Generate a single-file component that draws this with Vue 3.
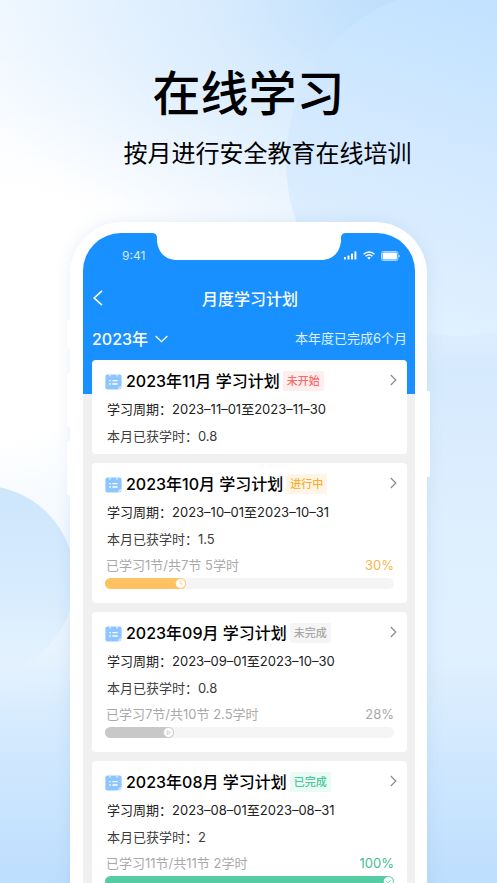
<script setup>
import { ref } from 'vue'

const year = ref('2023')
const plans = [
  { title: '2023年11月 学习计划', status: '未开始', tone: 'red', period: '2023–11–01至2023–11–30', hours: '0.8' },
  { title: '2023年10月 学习计划', status: '进行中', tone: 'orange', period: '2023–10–01至2023–10–31', hours: '1.5', done: '已学习1节/共7节 5学时', percent: '30%', fill: 28, mark: 'clock' },
  { title: '2023年09月 学习计划', status: '未完成', tone: 'gray', period: '2023–09–01至2023–10–30', hours: '0.8', done: '已学习7节/共10节 2.5学时', percent: '28%', fill: 24, mark: 'play' },
  { title: '2023年08月 学习计划', status: '已完成', tone: 'green', period: '2023–08–01至2023–08–31', hours: '2', done: '已学习11节/共11节 2学时', percent: '100%', fill: 100, mark: 'check' },
]
</script>

<template>
  <main class="page">
    <div class="disc disc-right"></div>
    <div class="disc disc-left"></div>

    <header class="hero">
      <h1>在线学习</h1>
      <p>按月进行安全教育在线培训</p>
    </header>

    <div class="phone">
      <span class="key key-mute"></span>
      <span class="key key-up"></span>
      <span class="key key-down"></span>
      <span class="key key-power"></span>

      <div class="screen">
        <svg class="notch" viewBox="0 0 194 27" aria-hidden="true">
          <path d="M0 0Q5 0 5 5V8C6 19 13 27 25 27H169C181 27 188 19 189 8V5Q189 0 194 0Z" fill="#fff" />
        </svg>

        <div class="status">
          <span>9:41</span>
          <span class="status-icons">
            <svg width="13" height="9" viewBox="0 0 13 9" fill="#fff">
              <rect x="0" y="6" width="2" height="2.6" rx=".5" />
              <rect x="3.5" y="4.5" width="2" height="4.1" rx=".5" />
              <rect x="7" y="2.6" width="2" height="6" rx=".5" />
              <rect x="10.4" y=".3" width="2" height="8.3" rx=".5" />
            </svg>
            <svg width="12" height="9" viewBox="0 0 12 9" fill="none" stroke="#fff" stroke-width="1.5">
              <path d="M.6 3.2C3.7.1 8.3.1 11.4 3.2" />
              <path d="M2.6 5.3C4.6 3.5 7.4 3.5 9.4 5.3" />
              <path d="M4.1 6.6C5.3 5.8 6.7 5.8 7.9 6.6L6 8.6Z" fill="#fff" stroke="none" />
            </svg>
            <svg width="19" height="10" viewBox="0 0 19 10">
              <rect x=".5" y=".5" width="16.4" height="9" rx="1.8" fill="none" stroke="#b5dcff" stroke-width=".9" />
              <rect x="1.5" y="1.5" width="14.4" height="7" rx=".8" fill="#fff" />
              <path d="M17.6 3.4Q19 4 19 5T17.6 6.6Z" fill="#b5dcff" />
            </svg>
          </span>
        </div>

        <nav class="nav">
          <button class="back" type="button" aria-label="返回">
            <svg width="10" height="16" viewBox="0 0 10 16" fill="none" stroke="#fff" stroke-width="1.6"><path d="M9 .8 1.2 8 9 15.2" /></svg>
          </button>
          <h2>月度学习计划</h2>
        </nav>

        <div class="summary">
          <label class="year">
            <select v-model="year" aria-label="年份">
              <option value="2023">2023年</option>
            </select>
            <svg width="13" height="8" viewBox="0 0 13 8" fill="none" stroke="#fff" stroke-width="1.3"><path d="M.6 1 6.5 6.6 12.4 1" /></svg>
          </label>
          <span class="total">本年度已完成6个月</span>
        </div>

        <section class="list">
          <article v-for="plan in plans" :key="plan.title" class="card" :class="plan.tone">
            <div class="card-head">
              <svg class="calendar" width="17" height="17" viewBox="0 0 17 17">
                <path d="M2.4 1.6H14.6Q16.6 1.6 16.6 3.6V12.6L12.8 16.4H2.4Q.4 16.4.4 14.4V3.6Q.4 1.6 2.4 1.6Z" fill="#8cc5ff" />
                <path d="M16.6 12.6V14.4Q16.6 16.4 14.6 16.4H12.8Q13.2 13 16.6 12.6Z" fill="#c3e0ff" />
                <path d="M5 .6V3.6M12 .6V3.6" stroke="#e4f1ff" stroke-width="1.3" />
                <path d="M4.2 7.6H5.8M7.4 7.6H12.6M4.2 11H5.8M7.4 11H12.6" stroke="#fff" stroke-width="1.3" />
              </svg>
              <h3>{{ plan.title }}</h3>
              <span class="badge">{{ plan.status }}</span>
              <a class="more" href="#" :aria-label="plan.title">
                <svg width="7" height="12" viewBox="0 0 7 12" fill="none" stroke="#8b8b8b" stroke-width="1.2"><path d="M.8 1 5.8 6 .8 11" /></svg>
              </a>
            </div>
            <p class="row">学习周期：{{ plan.period }}</p>
            <p class="row hours">本月已获学时：{{ plan.hours }}</p>
            <div v-if="plan.done" class="progress">
              <div class="progress-text">
                <span>{{ plan.done }}</span>
                <span class="percent">{{ plan.percent }}</span>
              </div>
              <div class="track">
                <div class="fill" :style="{ width: plan.fill + '%' }">
                  <svg width="11" height="11" viewBox="0 0 11 11" fill="none" stroke="currentColor" stroke-width=".8">
                    <circle cx="5.5" cy="5.5" r="4.9" fill="#fff" stroke-width=".6" />
                    <path v-if="plan.mark === 'clock'" d="M5.2 3V5.9H7.6" />
                    <path v-else-if="plan.mark === 'play'" d="M4.2 3.5 7.6 5.5 4.2 7.5Z" />
                    <path v-else d="M3.2 5.6 4.9 7.2 7.8 3.9" />
                  </svg>
                </div>
              </div>
            </div>
          </article>
        </section>
      </div>
    </div>
  </main>
</template>

<style>
body {
  margin: 0;
}
</style>

<style scoped>
.page {
  position: relative;
  box-sizing: border-box;
  height: 100vh;
  overflow: hidden;
  font-family: Inter, "Noto Sans CJK SC", sans-serif;
  color: #222;
  background:
    radial-gradient(ellipse 100% 30% at 85% 0, #b9dcfb 0%, rgba(200, 228, 253, 0.6) 45%, rgba(230, 243, 255, 0) 100%),
    radial-gradient(ellipse 90% 45% at 0 36%, #fff 30%, rgba(255, 255, 255, 0) 100%),
    linear-gradient(180deg, #f4f9ff 0%, #eef5fe 26%, #d6eafe 42%, #deeffe 60%, #e0f0fe 74%, #bddefe 100%);
}
h1, h2, h3, p {
  margin: 0;
}
.disc {
  position: absolute;
  border-radius: 50%;
}
.disc-right {
  top: -12px;
  right: -137px;
  width: 348px;
  height: 348px;
  background: linear-gradient(200deg, #bfe1ff 10%, #d3e9ff 50%, #e5f3ff 100%);
}
.disc-left {
  top: 485px;
  left: -115px;
  width: 190px;
  height: 190px;
  background: linear-gradient(180deg, #cde6fc, #d8ecfe 60%, rgba(217, 237, 254, 0));
}
.hero {
  position: relative;
  padding-top: 60px;
  text-align: center;
  color: #000;
}
.hero h1 {
  font-size: 48px;
  line-height: 68px;
  font-weight: 500;
}
.hero p {
  padding-left: 38px;
  font-size: 24px;
  line-height: 52px;
}
.phone {
  position: relative;
  margin: 42px 70px 0;
  padding: 11px 12px 0 13px;
  border-radius: 52px 52px 0 0;
  background: #fff;
  box-shadow: 0 0 16px rgba(100, 150, 200, 0.15);
}
.key {
  position: absolute;
  left: -3px;
  width: 3px;
  background: #fff;
  border-radius: 2px 0 0 2px;
}
.key-mute {
  top: 98px;
  height: 29px;
}
.key-up {
  top: 151px;
  height: 54px;
}
.key-down {
  top: 219px;
  height: 54px;
}
.key-power {
  left: auto;
  right: -3px;
  top: 169px;
  height: 86px;
  border-radius: 0 2px 2px 0;
}
.screen {
  position: relative;
  overflow: hidden;
  border-radius: 38px 38px 0 0;
  background: linear-gradient(#1890ff 161px, #f0f0f0 161px);
}
.notch {
  position: absolute;
  top: 0;
  left: 50%;
  width: 194px;
  height: 27px;
  margin-left: -97px;
}
.status {
  display: flex;
  align-items: center;
  justify-content: space-between;
  height: 45px;
  padding: 0 15px 0 39px;
  color: #d6ebff;
  font-size: 12px;
}
.status-icons {
  display: flex;
  align-items: center;
  gap: 6px;
}
.nav {
  position: relative;
  display: flex;
  align-items: center;
  justify-content: center;
  height: 40px;
  padding-left: 2px;
  color: #fff;
}
.nav h2 {
  font-size: 16px;
  font-weight: 500;
}
.back {
  position: absolute;
  left: 10px;
  display: flex;
  padding: 0;
  border: 0;
  background: none;
}
.summary {
  display: flex;
  align-items: center;
  justify-content: space-between;
  height: 42px;
  padding: 0 8px 0 9px;
  color: #fff;
}
.year {
  display: flex;
  align-items: center;
  gap: 6px;
}
.year select {
  appearance: none;
  margin: 0;
  padding: 0;
  border: 0;
  background: none;
  color: #fff;
  font: 500 16px Inter, "Noto Sans CJK SC", sans-serif;
}
.total {
  padding-bottom: 4px;
  font-size: 13px;
  color: #dff0ff;
}
.list {
  display: grid;
  gap: 9px;
  padding: 0 8px 9px 9px;
}
.card {
  padding: 9px 10px 4px 13px;
  border-radius: 4px;
  background: #fff;
}
.card-head {
  display: flex;
  align-items: center;
  height: 24px;
  margin-bottom: 3px;
}
.card-head h3 {
  margin: 0 3px 0 4px;
  font-size: 16px;
  line-height: 24px;
  font-weight: 500;
  color: #000;
  white-space: nowrap;
}
.badge {
  padding: 0 4px;
  border-radius: 2px;
  font-size: 11px;
  line-height: 20px;
  font-weight: 500;
  white-space: nowrap;
}
.more {
  display: flex;
  margin-left: auto;
  padding-bottom: 3px;
}
.row {
  padding-left: 2px;
  font-size: 13px;
  line-height: 27px;
  white-space: nowrap;
}
.hours {
  color: #3c3c3c;
}
.progress {
  padding: 0 3px 10px 0;
}
.progress-text {
  display: flex;
  justify-content: space-between;
  padding-left: 1px;
  font-size: 13px;
  line-height: 25px;
  color: #a9a9a9;
}
.track {
  border-radius: 6px;
  background: #f5f5f5;
}
.fill {
  display: flex;
  justify-content: flex-end;
  border-radius: 6px;
  background: currentColor;
}
.red .badge {
  color: #f56c6c;
  background: #ffeeee;
}
.orange .badge {
  color: #faad30;
  background: #fff5e6;
}
.orange .percent {
  color: #f6b84e;
}
.orange .fill {
  color: #ffc162;
}
.gray .badge {
  color: #a8a8a8;
  background: #f5f5f5;
}
.gray .fill {
  color: #c8c8c8;
}
.green .badge {
  color: #4bc99b;
  background: #eafaf4;
}
.green .percent {
  color: #42bd8f;
}
.green .fill {
  color: #56cca2;
}
</style>
